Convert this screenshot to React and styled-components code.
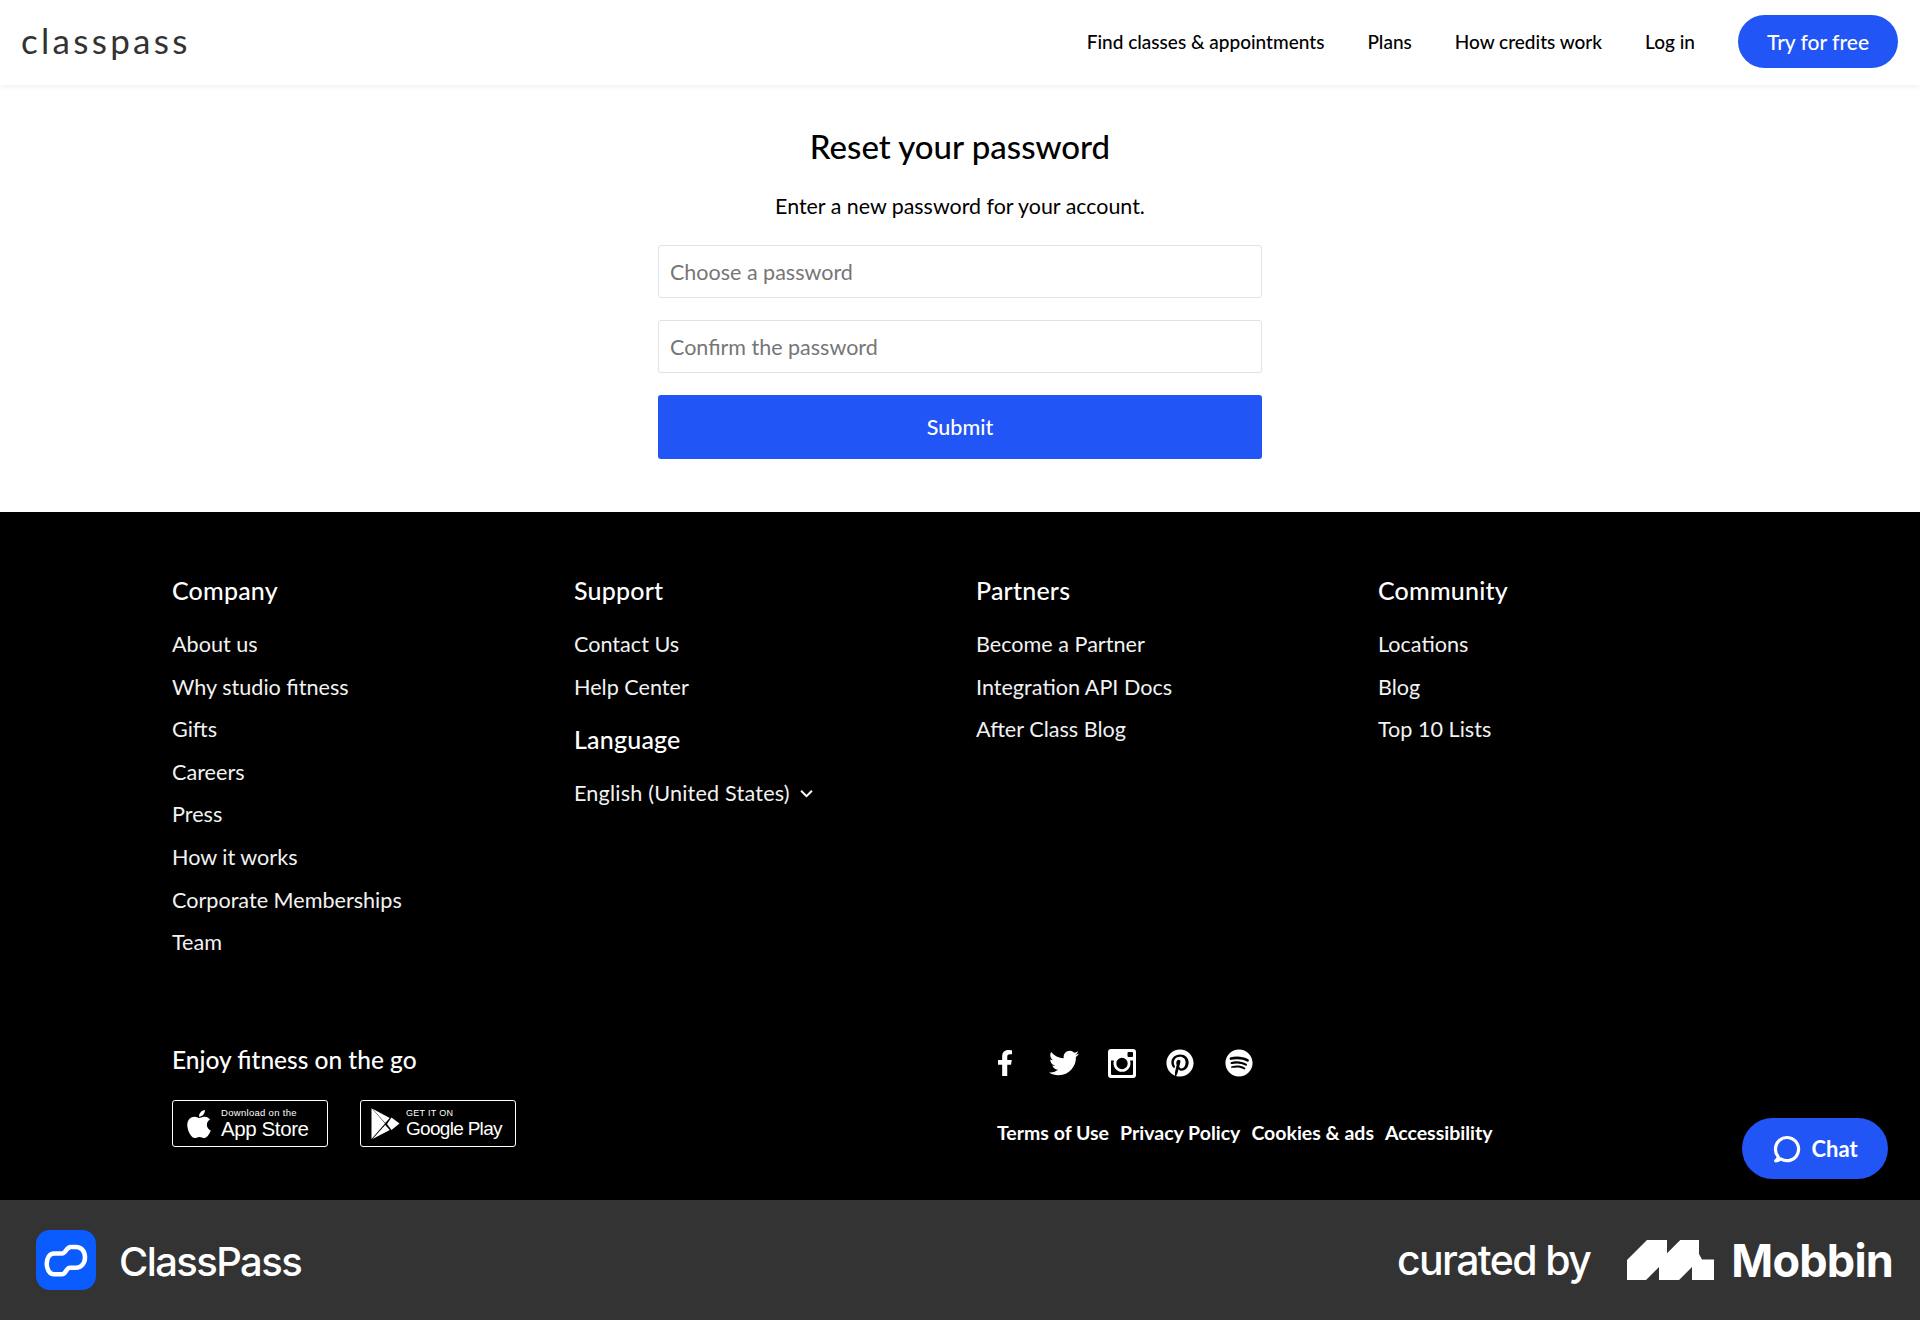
import styled, { createGlobalStyle } from "styled-components";
import { FaApple, FaFacebookF, FaPinterest, FaSpotify, FaTwitter } from "react-icons/fa";

const columns = [
    { title: "Company", links: ["About us", "Why studio fitness", "Gifts", "Careers", "Press", "How it works", "Corporate Memberships", "Team"] },
    { title: "Support", links: ["Contact Us", "Help Center"], language: true },
    { title: "Partners", links: ["Become a Partner", "Integration API Docs", "After Class Blog"] },
    { title: "Community", links: ["Locations", "Blog", "Top 10 Lists"] },
];

const legalLinks = ["Terms of Use", "Privacy Policy", "Cookies & ads", "Accessibility"];

export default function App() {
    return (
        <Page>
            <GlobalStyle />
            <Header>
                <Logo>classpass</Logo>
                <Nav>
                    <NavLink>Find classes &amp; appointments</NavLink>
                    <NavLink>Plans</NavLink>
                    <NavLink>How credits work</NavLink>
                    <NavLink>Log in</NavLink>
                    <TryButton>Try for free</TryButton>
                </Nav>
            </Header>
            <Main>
                <Title>Reset your password</Title>
                <Intro>Enter a new password for your account.</Intro>
                <Form>
                    <Input placeholder="Choose a password" />
                    <Input placeholder="Confirm the password" />
                    <Submit>Submit</Submit>
                </Form>
            </Main>
            <Footer>
                <LinkGrid>
                    {columns.map((col) => (
                        <Column key={col.title}>
                            <ColumnTitle>{col.title}</ColumnTitle>
                            {col.links.map((link) => (
                                <FooterLink key={link}>{link}</FooterLink>
                            ))}
                            {col.language && (
                                <>
                                    <LanguageTitle>Language</LanguageTitle>
                                    <LanguageRow>
                                        English (United States)
                                        <Chevron viewBox="0 0 12 8">
                                            <path d="M1 1.5l5 5 5-5" />
                                        </Chevron>
                                    </LanguageRow>
                                </>
                            )}
                        </Column>
                    ))}
                </LinkGrid>
                <BottomRow>
                    <div>
                        <AppTitle>Enjoy fitness on the go</AppTitle>
                        <Badges>
                            <Badge>
                                <FaApple size={32} />
                                <BadgeText>
                                    <BadgeSmall>Download on the</BadgeSmall>
                                    <BadgeBig>App Store</BadgeBig>
                                </BadgeText>
                            </Badge>
                            <Badge>
                                <PlayIcon viewBox="0 0 28 31">
                                    <path d="M0 0l13.500 15.500L0 31zM1 .7l17.300 9.300-4.600 5zM20 9.500l8 6-8 6.500-4.500-6zM1 31l12.700-14 4.600 5z" />
                                </PlayIcon>
                                <BadgeText>
                                    <BadgeSmall $upper>GET IT ON</BadgeSmall>
                                    <BadgeBig $tight>Google Play</BadgeBig>
                                </BadgeText>
                            </Badge>
                        </Badges>
                    </div>
                    <LegalColumn>
                        <Socials>
                            <SocialSlot><FaFacebookF size={26} /></SocialSlot>
                            <SocialSlot><FaTwitter size={30} /></SocialSlot>
                            <SocialSlot>
                                <svg width="28" height="29" viewBox="0 0 28 29">
                                    <path
                                        fillRule="evenodd"
                                        fill="currentColor"
                                        d="M3 0h22a3 3 0 0 1 3 3v23a3 3 0 0 1-3 3H3a3 3 0 0 1-3-3V3a3 3 0 0 1 3-3zM3 11.500V25a1 1 0 0 0 1 1h20a1 1 0 0 0 1-1V11.500h-3a8.500 8.500 0 1 1-16 0zM14 8.800a5.700 5.700 0 1 0 0 11.400a5.700 5.700 0 0 0 0-11.400zM20.500 3a1 1 0 0 0-1 1v3a1 1 0 0 0 1 1h3.500a1 1 0 0 0 1-1V4a1 1 0 0 0-1-1z"
                                    />
                                </svg>
                            </SocialSlot>
                            <SocialSlot><FaPinterest size={28} /></SocialSlot>
                            <SocialSlot><FaSpotify size={28} /></SocialSlot>
                        </Socials>
                        <LegalRow>
                            {legalLinks.map((link) => (
                                <LegalLink key={link}>{link}</LegalLink>
                            ))}
                        </LegalRow>
                    </LegalColumn>
                </BottomRow>
                <ChatButton>
                    <svg width="30" height="30" viewBox="0 0 28 28" fill="none" stroke="#fff" strokeWidth="3" strokeLinecap="round" strokeLinejoin="round">
                        <path d="M3.500 25c1.800-.2 3.500-.9 4.700-1.800a10.800 10.800 0 1 0-5-9c0 2.800 1 5 2.500 6.800.2 1.500-.8 3-2.200 4z" />
                    </svg>
                    Chat
                </ChatButton>
            </Footer>
            <CreditBar>
                <Brand>
                    <BrandIcon>
                        <svg width="60" height="60" viewBox="0 0 60 60" fill="none" stroke="#fff" strokeWidth="4.5">
                            <path d="M18 23.500H26C30 23.500 30 17 35 17H40C45.500 17 49 21.500 49 27.300C49 33 45.500 37.700 40 37.700H34C30 37.700 30 44.300 26 44.300H18C13.500 44.300 10.700 39 10.700 33.800C10.700 28 13.500 23.500 18 23.500Z" />
                        </svg>
                    </BrandIcon>
                    <BrandName>ClassPass</BrandName>
                </Brand>
                <Curated>
                    <CuratedText>curated by</CuratedText>
                    <MobbinMark viewBox="0 0 87 40">
                        <path d="M0 20L20 0h20v13.300L53.300 0H72v14l3 5.500h12V40H65V27L52 40H32V27L19 40H0z" />
                    </MobbinMark>
                    <MobbinName>Mobbin</MobbinName>
                </Curated>
            </CreditBar>
        </Page>
    );
}

const GlobalStyle = createGlobalStyle`
    * {
        box-sizing: border-box;
    }
    body {
        margin: 0;
        background: #fff;
        font-family: "Lato", "Liberation Sans", sans-serif;
    }
    input, button {
        font-family: inherit;
    }
`

const Page = styled.div`
    display: flex;
    flex-direction: column;
    height: 1320px;
    overflow: hidden;
`

const Header = styled.header`
    display: flex;
    align-items: center;
    justify-content: space-between;
    height: 85px;
    padding: 0 22px 2px 21px;
    box-shadow: 0 1px 6px rgba(0, 0, 0, 0.08);
`

const Logo = styled.div`
    margin-bottom: 4px;
    font-size: 35px;
    letter-spacing: 3.3px;
    color: #333;
`

const Nav = styled.nav`
    display: flex;
    align-items: center;
    gap: 43px;
`

const NavLink = styled.a`
    font-size: 19px;
    font-weight: 500;
    color: #000;
`

const TryButton = styled.button`
    width: 160px;
    height: 53px;
    border: 0;
    border-radius: 27px;
    background: #2255f6;
    color: #fff;
    font-size: 21px;
    font-weight: 500;
`

const Main = styled.main`
    display: flex;
    flex-direction: column;
    align-items: center;
    height: 427px;
    padding-top: 42px;
`

const Title = styled.h1`
    margin: 0;
    font-size: 33px;
    line-height: 38px;
    font-weight: 500;
    color: #000;
`

const Intro = styled.p`
    margin: 28px 0 0;
    font-size: 21.400px;
    line-height: 26px;
    color: #000;
`

const Form = styled.div`
    display: flex;
    flex-direction: column;
    gap: 22px;
    width: 604px;
    margin-top: 26px;
`

const Input = styled.input`
    height: 53px;
    padding: 0 11px;
    border: 1px solid #e2e2e2;
    border-radius: 3px;
    font-size: 21.500px;
    color: #000;
    &::placeholder {
        color: #767676;
    }
`

const Submit = styled.button`
    height: 64px;
    border: 0;
    border-radius: 3px;
    background: #2255f6;
    color: #fff;
    font-size: 21.500px;
    font-weight: 500;
`

const Footer = styled.footer`
    position: relative;
    display: flex;
    flex-direction: column;
    height: 688px;
    padding: 62px 172px 0;
    background: #000;
    color: #fff;
`

const LinkGrid = styled.div`
    display: grid;
    grid-template-columns: repeat(4, 402px);
    height: 470px;
`

const Column = styled.div`
    display: flex;
    flex-direction: column;
    align-items: flex-start;
`

const ColumnTitle = styled.h3`
    margin: 0 0 17px;
    font-size: 25px;
    line-height: 32px;
    font-weight: 500;
    letter-spacing: 0.2px;
`

const FooterLink = styled.a`
    font-size: 21.600px;
    line-height: 42.600px;
    color: #f2f2f2;
`

const LanguageTitle = styled(ColumnTitle)`
    margin: 15px 0 17px;
`

const LanguageRow = styled(FooterLink)`
    display: flex;
    align-items: center;
    gap: 10px;
    letter-spacing: 0.2px;
`

const Chevron = styled.svg`
    width: 13px;
    height: 9px;
    fill: none;
    stroke: #fff;
    stroke-width: 1.800;
`

const BottomRow = styled.div`
    display: grid;
    grid-template-columns: 804px 1fr;
`

const AppTitle = styled.h3`
    margin: 0 0 1px;
    font-size: 24.500px;
    line-height: 32px;
    font-weight: 500;
`

const Badges = styled.div`
    display: flex;
    gap: 32px;
    margin-top: 24px;
`

const Badge = styled.div`
    display: flex;
    align-items: center;
    gap: 6px;
    width: 156px;
    height: 47px;
    padding-left: 10px;
    border: 1px solid #fff;
    border-radius: 3px;
`

const PlayIcon = styled.svg`
    flex: none;
    width: 29px;
    height: 31px;
    fill: #fff;
`

const BadgeText = styled.div`
    display: flex;
    flex-direction: column;
    white-space: nowrap;
    font-family: "Liberation Sans", sans-serif;
`

const BadgeSmall = styled.span`
    font-size: ${(p) => (p.$upper ? "9px" : "9.500px")};
    line-height: 10px;
    letter-spacing: 0.3px;
`

const BadgeBig = styled.span`
    font-size: ${(p) => (p.$tight ? "19px" : "20.500px")};
    line-height: 22px;
    letter-spacing: ${(p) => (p.$tight ? "-0.7px" : "-0.4px")};
`

const LegalColumn = styled.div`
    display: flex;
    flex-direction: column;
`

const Socials = styled.div`
    display: flex;
    align-items: center;
    height: 32px;
    margin-top: 3px;
`

const SocialSlot = styled.a`
    display: flex;
    justify-content: center;
    width: 58.400px;
    color: #fff;
`

const LegalRow = styled.div`
    display: flex;
    gap: 11px;
    margin: 42px 0 0 21px;
`

const LegalLink = styled.a`
    font-size: 19.500px;
    line-height: 24px;
    font-weight: 700;
`

const ChatButton = styled.button`
    position: absolute;
    right: 32px;
    bottom: 21px;
    display: flex;
    align-items: center;
    justify-content: center;
    gap: 9px;
    width: 146px;
    height: 61px;
    border: 0;
    border-radius: 31px;
    background: #2255f6;
    color: #fff;
    font-size: 22px;
    font-weight: 700;
`

const CreditBar = styled.div`
    display: flex;
    align-items: center;
    justify-content: space-between;
    height: 120px;
    padding: 0 27px 0 36px;
    background: #333;
    color: #fff;
    font-family: "Inter", sans-serif;
`

const Brand = styled.div`
    display: flex;
    align-items: center;
    gap: 23px;
`

const BrandIcon = styled.div`
    display: flex;
    align-items: center;
    justify-content: center;
    width: 60px;
    height: 60px;
    border-radius: 14px;
    background: #0a5cff;
`

const BrandName = styled.span`
    padding-top: 2px;
    font-size: 40px;
    font-weight: 500;
    letter-spacing: -1.600px;
`

const Curated = styled.div`
    display: flex;
    align-items: center;
`

const CuratedText = styled.span`
    font-size: 41px;
    font-weight: 500;
    letter-spacing: -1.600px;
`

const MobbinMark = styled.svg`
    width: 87px;
    height: 40px;
    margin: 0 17px 0 37px;
    fill: #fff;
`

const MobbinName = styled.span`
    font-size: 45px;
    font-weight: 700;
    letter-spacing: -0.800px;
`
